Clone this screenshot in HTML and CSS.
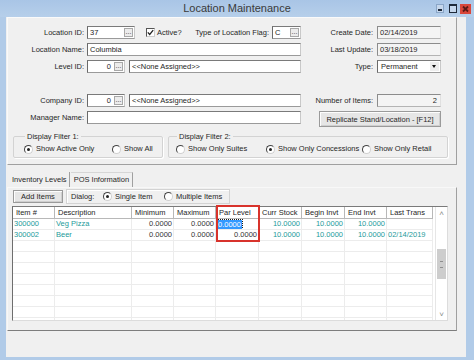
FILE: index.html
```html
<!DOCTYPE html>
<html lang="en">
<head>
  <meta charset="UTF-8" />
  <title>Location Maintenance</title>
  <link rel="stylesheet" href="styles.css">
</head>
<body>
<div class="window">
  <div class="titlebar">
    <span class="tb-side"></span>
    <span class="title">Location Maintenance</span>
    <span class="tb-side controls">
      <span class="ctl ctl-min"></span>
      <span class="ctl ctl-max"></span>
      <span class="ctl ctl-close">
        <svg width="11" height="10" viewBox="0 0 11 10"><path d="M3 2.5 L8 7.5 M8 2.5 L3 7.5" stroke="#5a1a16" stroke-width="1.8"/></svg>
      </span>
    </span>
  </div>

  <div class="frame">
    <div class="client">

      <!-- location header -->
      <div class="panel">
        <div class="row">
          <div class="left">
            <span class="lbl">Location ID:</span>
            <span class="field w-id"><span class="txt">37</span><span class="dots">...</span></span>
            <span class="check">
              <span class="checkbox"><svg width="7" height="7" viewBox="0 0 7 7"><path d="M0.8 3.4 L2.7 5.4 L6.2 1.2" fill="none" stroke="#222" stroke-width="1.3"/></svg></span>Active?
            </span>
            <span class="lbl lbl-flag">Type of Location Flag:</span>
            <span class="field w-flag"><span class="txt">C</span><span class="dots">...</span></span>
          </div>
          <div class="right">
            <span class="rlbl">Create Date:</span>
            <span class="field ro w-right">02/14/2019</span>
          </div>
        </div>

        <div class="row">
          <div class="left">
            <span class="lbl">Location Name:</span>
            <span class="field w-name">Columbia</span>
          </div>
          <div class="right">
            <span class="rlbl">Last Update:</span>
            <span class="field ro w-right">03/18/2019</span>
          </div>
        </div>

        <div class="row">
          <div class="left">
            <span class="lbl">Level ID:</span>
            <span class="field w-small"><span class="txt num">0</span><span class="dots">...</span></span>
            <span class="field w-none">&lt;&lt;None Assigned&gt;&gt;</span>
          </div>
          <div class="right">
            <span class="rlbl">Type:</span>
            <span class="field select w-right"><span class="txt">Permanent</span><span class="arrow"></span></span>
          </div>
        </div>

        <div class="row"></div>

        <div class="row">
          <div class="left">
            <span class="lbl">Company ID:</span>
            <span class="field w-small"><span class="txt num">0</span><span class="dots">...</span></span>
            <span class="field w-none">&lt;&lt;None Assigned&gt;&gt;</span>
          </div>
          <div class="right">
            <span class="rlbl">Number of Items:</span>
            <span class="field ro w-right num">2</span>
          </div>
        </div>

        <div class="row row-tall">
          <div class="left">
            <span class="lbl">Manager Name:</span>
            <span class="field w-name"></span>
          </div>
          <div class="right">
            <span class="btn btn-replicate">Replicate Stand/Location - [F12]</span>
          </div>
        </div>

        <div class="filters">
          <fieldset class="group group-1">
            <legend>Display Filter 1:</legend>
            <span class="radio r-active"><span class="dot on"></span>Show Active Only</span>
            <span class="radio"><span class="dot"></span>Show All</span>
          </fieldset>
          <fieldset class="group group-2">
            <legend>Display Filter 2:</legend>
            <span class="radio r-suites"><span class="dot"></span>Show Only Suites</span>
            <span class="radio r-conc"><span class="dot on"></span>Show Only Concessions</span>
            <span class="radio"><span class="dot"></span>Show Only Retail</span>
          </fieldset>
        </div>
      </div>

      <!-- tabs -->
      <div class="tabs">
        <span class="tab active">Inventory Levels</span>
        <span class="tab">POS Information</span>
      </div>

      <div class="tabpage">
        <div class="toolbar">
          <span class="btn btn-add">Add Items</span>
          <div class="dialog-box">
            <span class="dialog-lbl">Dialog:</span>
            <span class="radio r-single"><span class="dot on"></span>Single Item</span>
            <span class="radio"><span class="dot"></span>Multiple Items</span>
          </div>
        </div>

        <div class="grid">
          <div class="cols">
            <div class="hd">Item #</div>
            <div class="hd">Description</div>
            <div class="hd">Minimum</div>
            <div class="hd">Maximum</div>
            <div class="hd">Par Level</div>
            <div class="hd">Curr Stock</div>
            <div class="hd">Begin Invt</div>
            <div class="hd">End Invt</div>
            <div class="hd">Last Trans</div>

            <div class="c teal">300000</div>
            <div class="c teal">Veg Pizza</div>
            <div class="c n">0.0000</div>
            <div class="c n">0.0000</div>
            <div class="c sel-cell"><span class="sel">0.0000</span></div>
            <div class="c n teal">10.0000</div>
            <div class="c n teal">10.0000</div>
            <div class="c n teal">10.0000</div>
            <div class="c teal"></div>

            <div class="c teal">300002</div>
            <div class="c teal">Beer</div>
            <div class="c n">0.0000</div>
            <div class="c n">0.0000</div>
            <div class="c n">0.0000</div>
            <div class="c n teal">10.0000</div>
            <div class="c n teal">10.0000</div>
            <div class="c n teal">10.0000</div>
            <div class="c teal">02/14/2019</div>
          </div>
          <div class="vscroll">
            <span class="sb-arrow">&#x2C4;</span>
            <span class="sb-track"><span class="sb-thumb"></span></span>
            <span class="sb-arrow">&#x2C5;</span>
          </div>
          <div class="callout"></div>
        </div>
      </div>

    </div>
  </div>
</div>
<script>
  // empty grid rows
  const cols = document.querySelector('.cols');
  for (let r = 0; r < 8; r++) {
    for (let c = 0; c < 9; c++) {
      const d = document.createElement('div'); d.className = 'c';
      cols.appendChild(d);
    }
  }
</script>
</body>
</html>
```

FILE: styles.css
```css
* { margin: 0; padding: 0; box-sizing: border-box; }
body { width: 474px; height: 360px; overflow: hidden; font-family: "Liberation Sans", Arial, sans-serif; font-size: 7.5px; color: #262626; background: #b1cbe8; }

.window { width: 474px; height: 360px; display: flex; flex-direction: column; background: #b1cbe8; }

/* title bar */
.titlebar { height: 17px; display: flex; align-items: center; background: linear-gradient(#a9c5e6, #b6cfea); }
.tb-side { width: 38px; display: flex; align-items: center; }
.title { flex: 1; text-align: center; font-size: 11px; color: #3a3a3a; line-height: 17px; }
.controls { gap: 0; padding-right: 3px; justify-content: flex-end; }
.ctl { display: inline-block; height: 9px; }
.ctl-min { width: 8px; background: #c6d7ec; border: 1px solid #8aa6c8; position: relative; }
.ctl-min::after { content: ""; position: absolute; left: 1px; right: 1px; bottom: 1px; height: 2px; background: #1f2a3a; }
.ctl-max { width: 8px; margin-left: 5px; background: #c6d7ec; border: 1px solid #1f2a3a; border-top-width: 2px; }
.ctl-close { width: 11px; height: 10px; margin-left: 3px; background: #d9473b; display: flex; }

/* frame and client area */
.frame { flex: 1; padding: 0 8px 3px 6px; }
.client { height: 100%; background: #f0f0f0; }

.panel { margin-left: 1px; width: 450px; border: 1px solid; border-color: #fafafa #a0a0a0 #a0a0a0 #fafafa; padding: 8px 0 6px 0; }
.row { display: flex; height: 13px; margin-bottom: 4px; }
.row-tall { height: 16px; }
.left { width: 297px; display: flex; align-items: flex-start; }
.right { display: flex; align-items: flex-start; }

.lbl { width: 76px; margin-right: 3px; text-align: right; line-height: 13px; white-space: nowrap; }
.lbl-flag { width: 86px; }
.rlbl { width: 68px; margin-right: 4px; text-align: right; line-height: 13px; white-space: nowrap; }

.field { height: 13px; display: flex; align-items: center; background: #fff; border: 1px solid; border-color: #7a7a7a #c9c9c9 #9a9a9a #6a6a6a; padding-left: 2px; line-height: 11px; white-space: nowrap; overflow: hidden; }
.field.ro { background: #f4f4f4; border-color: #8c8c8c #e0e0e0 #b4b4b4 #8c8c8c; }
.field.num { justify-content: flex-end; padding-right: 3px; }
.txt { flex: 1; }
.txt.num { text-align: right; padding-right: 3px; }
.dots { width: 9px; height: 9px; margin-right: 1px; border: 1px solid #a8a8a8; background: #ececec; font-size: 7px; line-height: 6px; text-align: center; color: #333; }
.w-id { width: 48px; }
.w-flag { width: 29px; }
.w-name { width: 214px; }
.w-small { width: 38px; }
.w-none { width: 172px; margin-left: 4px; }
.w-right { width: 64px; }
.select { padding-left: 3px; }
.arrow { width: 9px; height: 9px; margin-right: 1px; background: #eee; position: relative; }
.arrow::after { content: ""; position: absolute; left: 2px; top: 3px; border: 2.5px solid transparent; border-top: 3px solid #111; }

.check { width: 37px; margin-left: 11px; display: flex; align-items: center; line-height: 13px; }
.checkbox { width: 9px; height: 9px; margin-right: 2px; border: 1px solid; border-color: #555 #ccc #ccc #555; background: #fff; display: flex; align-items: center; justify-content: center; }

.btn { display: flex; align-items: center; justify-content: center; background: #e6e6e6; border: 1px solid #9a9a9a; box-shadow: inset 1px 1px #fdfdfd, inset -1px -1px #cfcfcf; white-space: nowrap; }
.btn-replicate { width: 122px; height: 16px; margin-left: 14px; }

/* filter groups */
.filters { display: flex; gap: 5px; margin: 4px 0 0 5px; }
.group { border: 1px solid #d3d3d3; border-radius: 2px; padding: 1px 4px 2px 10px; display: flex; box-shadow: 1px 1px #fff; }
.group legend { padding: 0 2px; line-height: 11px; margin-left: 1px; }
.group-1 { width: 150px; }
.group-2 { width: 280px; padding-left: 7px; }
.radio { display: flex; align-items: center; line-height: 12px; white-space: nowrap; }
.dot { width: 9px; height: 9px; border-radius: 50%; border: 1px solid; border-color: #444 #d0d0d0 #d0d0d0 #444; background: #fff; margin-right: 3px; display: flex; align-items: center; justify-content: center; }
.dot.on::after { content: ""; width: 3px; height: 3px; border-radius: 50%; background: #222; }
.r-active { width: 88px; }
.r-suites { width: 90px; }
.r-conc { width: 96px; }

/* tabs */
.tabs { display: flex; margin: 7px 0 0 4px; height: 15px; }
.tab { padding: 0 2px; line-height: 15px; border-right: 1px solid #a0a0a0; white-space: nowrap; }
.tab + .tab { border-top: 1px solid #d6d6d6; line-height: 13px; margin-left: 1px; padding: 0 3px; }

.tabpage { margin-left: 1px; width: 450px; height: 144px; border: 1px solid; border-color: #f8f8f8 #a0a0a0 #7d7d7d #f8f8f8; padding: 1px 0 0 4px; }
.toolbar { display: flex; height: 15px; gap: 3px; }
.btn-add { width: 50px; height: 13px; margin: 1px 0 0 1px; }
.dialog-box { width: 164px; height: 15px; border: 1px solid #d3d3d3; box-shadow: inset 1px 1px #fff; display: flex; align-items: center; }
.dialog-lbl { width: 36px; padding-left: 4px; }
.r-single { width: 61px; }

/* grid */
.grid { position: relative; margin-top: 2px; width: 436px; height: 115px; border: 1px solid; border-color: #7a7a7a #dcdcdc #dcdcdc #6e6e6e; display: flex; background: #fff; overflow: visible; }
.cols { width: 420px; height: 113px; overflow: hidden; display: grid; grid-template-columns: 42px 77px 42px 42px 43px 43px 43px 42px 46px; grid-template-rows: 12px; grid-auto-rows: 11px; align-content: start; }
.hd { border-right: 1px solid #b8b8b8; border-bottom: 1px solid #b8b8b8; padding-left: 3px; line-height: 11px; white-space: nowrap; overflow: hidden; }
.c { border-right: 1px solid #ececec; border-bottom: 1px solid #ececec; padding: 0 1px; line-height: 10px; white-space: nowrap; overflow: hidden; color: #333; }
.c.n { text-align: right; }
.c.teal { color: #1c9a9a; }
.sel-cell { padding-left: 1px; }
.sel { display: inline-block; background: #3399ff; color: #fff; line-height: 9px; padding: 0 1px; outline: 1px dotted #1a1a1a; margin-top: 1px; }

.vscroll { width: 12px; margin-left: 2px; display: flex; flex-direction: column; background: #fff; border-left: 1px solid #e6e6e6; }
.sb-arrow { height: 12px; text-align: center; font-size: 8px; line-height: 14px; color: #888; }
.sb-track { flex: 1; position: relative; }
.sb-thumb { position: absolute; left: 1px; right: 1px; top: 30px; height: 30px; background: #cdcdcd; }
.sb-thumb::after { content: ""; position: absolute; left: 3px; right: 3px; top: 12px; height: 5px; border-top: 1px solid #8d8d8d; border-bottom: 1px solid #8d8d8d; }

.callout { position: absolute; left: 203px; top: -2px; width: 44px; height: 37px; border: 2px solid #d8332c; }
```
